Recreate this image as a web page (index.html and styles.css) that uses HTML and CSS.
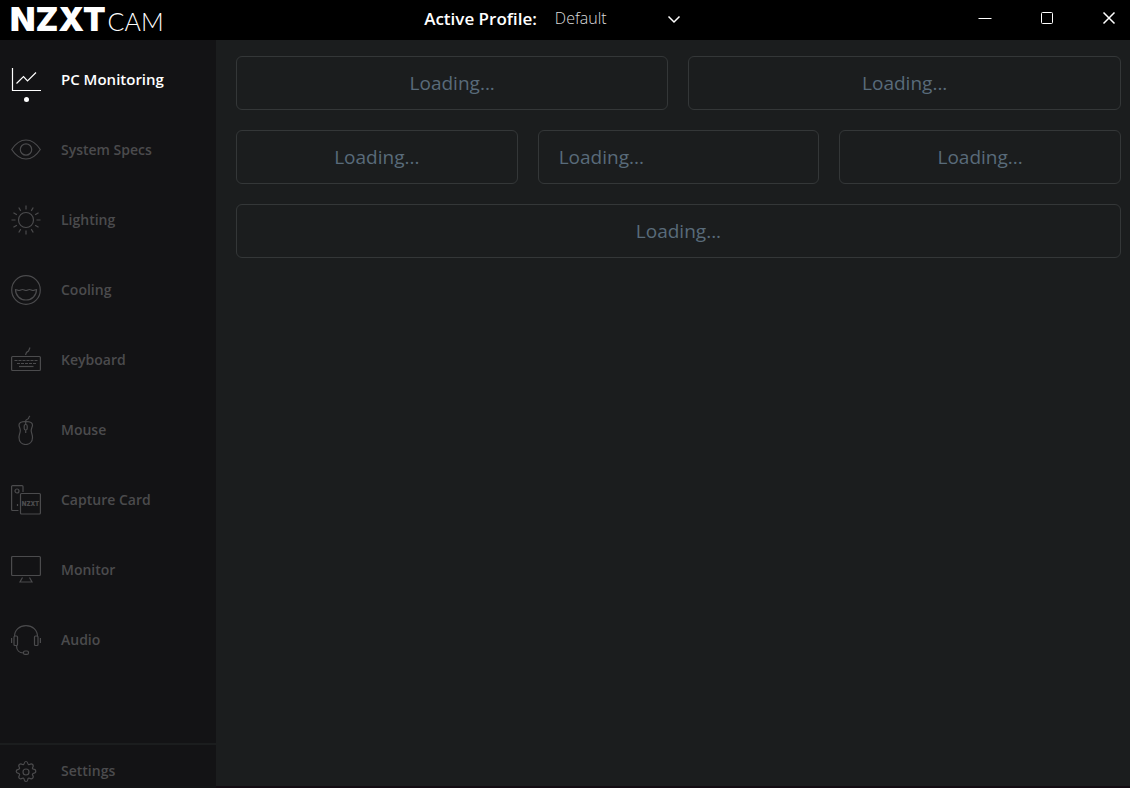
FILE: index.html
```html
<!DOCTYPE html>
<html lang="en">
<head>
  <meta charset="utf-8">
  <title>NZXT CAM</title>
  <link rel="stylesheet" href="styles.css">
</head>
<body>
  <header class="titlebar">
    <div class="logo"><span class="logo-brand">NZXT</span><span class="logo-product">CAM</span></div>

    <div class="profile">
      <label class="profile-label" for="profile">Active Profile:</label>
      <div class="profile-picker">
        <select id="profile" class="profile-select">
          <option>Default</option>
        </select>
        <svg class="chevron" viewBox="0 0 14 14"><path d="M1.5 4.500 7 10l5.500-5.500"/></svg>
      </div>
    </div>

    <div class="window-controls">
      <button type="button" aria-label="Minimize"><svg viewBox="0 0 14 14"><path d="M.5 7.500h13"/></svg></button>
      <button type="button" aria-label="Maximize"><svg viewBox="0 0 14 14"><rect x="1.500" y="1.500" width="11" height="11" rx="1"/></svg></button>
      <button type="button" aria-label="Close"><svg class="close" viewBox="0 0 14 14"><path d="M1.500 1.500l11 11M12.500 1.500l-11 11"/></svg></button>
    </div>
  </header>

  <div class="app">
    <aside class="sidebar">
      <nav class="nav">
        <a class="nav-item active" href="#monitoring">
          <svg class="icon" viewBox="0 0 30 30"><path d="M1.500 3v22.500H30M5.500 18.500l7-7 4 4.500 8.500-8.500"/></svg>
          <span>PC Monitoring</span>
        </a>
        <a class="nav-item" href="#specs">
          <svg class="icon" viewBox="0 0 30 30"><path d="M.7 14.500C5 8 9.500 5 15 5s10 3 14.300 9.500C25 21 20.500 24 15 24S5 21 .7 14.500z"/><circle cx="15" cy="14.500" r="5.700"/></svg>
          <span>System Specs</span>
        </a>
        <a class="nav-item" href="#lighting">
          <svg class="icon" viewBox="0 0 30 30">
            <circle cx="15" cy="15" r="7.500"/>
            <path d="M15 .5v4M15 25.500v4M.5 15h4M25.500 15h4M7.750 2.440l2 3.460M20.250 24.100l2 3.460M2.440 7.750l3.460 2M24.100 20.250l3.460 2M2.440 22.250l3.460-2M24.100 9.750l3.460-2M7.750 27.560l2-3.460M20.250 5.900l2-3.460"/>
          </svg>
          <span>Lighting</span>
        </a>
        <a class="nav-item" href="#cooling">
          <svg class="icon" viewBox="0 0 30 30"><circle cx="15" cy="15" r="14.300"/><path d="M4.500 14.500c0 6 4.500 10.500 10.500 10.500s10.500-4.500 10.500-10.500c-1.500 0-2 1-3.500 1s-2-1-3.500-1-2 1-3.500 1-2-1-3.500-1-2 1-3.500 1-2-1-3.500-1z"/></svg>
          <span>Cooling</span>
        </a>
        <a class="nav-item" href="#keyboard">
          <svg class="icon" viewBox="0 0 30 30"><rect x=".6" y="11.500" width="28.800" height="14" rx="1"/><path d="M14.500 10l1-2.500 2-1.500 1.500-3.500"/><path class="keys" d="M3.500 15.500h23.500M6 18.500h19"/><path d="M8 21.500h14.500"/></svg>
          <span>Keyboard</span>
        </a>
        <a class="nav-item" href="#mouse">
          <svg class="icon" viewBox="0 0 30 30"><path d="M14.700 6.500c-3 0-6.700 1-6.700 3.500 0 2 1.300 3 1.300 5.500S8 19.500 8 22.500c0 4.500 3 7 6.700 7s6.800-2.500 6.800-7c0-3-1.300-4.500-1.300-7s1.300-3.500 1.300-5.500c0-2.500-3.800-3.500-6.800-3.500zM14.700 6.500v3M14.700 15v3M14.700 9.500c-1 0-1.500.7-1.500 1.500v2.500c0 .8.500 1.500 1.500 1.500s1.500-.7 1.500-1.500V11c0-.8-.5-1.500-1.500-1.500zM14.700 6c0-2 2.300-1.500 2.800-2.500S17.500 2 19 1"/></svg>
          <span>Mouse</span>
        </a>
        <a class="nav-item" href="#capture">
          <svg class="icon" viewBox="0 0 30 30"><path d="M7.500 25.500H1.600a1 1 0 0 1-1-1V1.600a1 1 0 0 1 1-1H11a1 1 0 0 1 1 1V7M6.500 19v2"/><circle cx="6" cy="6" r="2"/><rect x="9.500" y="8.500" width="19.900" height="20.500" rx="1"/><text class="icon-text" x="19.500" y="21" text-anchor="middle">NZXT</text></svg>
          <span>Capture Card</span>
        </a>
        <a class="nav-item" href="#monitor">
          <svg class="icon" viewBox="0 0 30 30"><rect x=".6" y="1.500" width="28.800" height="19" rx="1"/><path d="M11.500 22.500l-2.500 4.500h12l-2.500-4.500"/></svg>
          <span>Monitor</span>
        </a>
        <a class="nav-item" href="#audio">
          <svg class="icon" viewBox="0 0 30 30"><path d="M3.500 11.500C3.500 5 8.500.6 15 .6S26.500 5 26.500 11.500M.6 13v5M29.400 13v5M5.500 20.500c0 5 3 7.500 7 7.500"/><rect x="3" y="11" width="3.500" height="9.500" rx="1"/><rect x="23.500" y="11" width="3.500" height="9.500" rx="1"/><rect x="12.500" y="26" width="5" height="3.400" rx="1.500"/></svg>
          <span>Audio</span>
        </a>
      </nav>

      <a class="settings" href="#settings">
        <svg class="icon" viewBox="0 0 30 30"><circle cx="15" cy="15" r="3"/><path stroke-linejoin="round" d="M13.200 6.500q.3-2 1.800-2t1.800 2q.3 1.500 1.800 1 1.800-1.300 3 0t0 3q-.6 1.300 1 1.700 2.200.3 2.200 1.800 0 2-2.200 2.300-1.600.5-1 1.900 1.300 1.800 0 3t-3 .1q-1.500-.6-1.800 1.200-.3 2-1.800 2t-1.800-2q-.3-1.800-1.800-1.200-1.800 1.200-3 0t0-3q.6-1.500-1-2-2.200-.3-2.200-2t2.200-2q1.600-.4 1-1.800-1.300-1.800 0-3t3 0q1.500.5 1.800-1z"/></svg>
        <span>Settings</span>
      </a>
    </aside>

    <main class="dashboard">
      <section class="card half">Loading...</section>
      <section class="card half">Loading...</section>
      <section class="card third">Loading...</section>
      <section class="card third card-left">Loading...</section>
      <section class="card third">Loading...</section>
      <section class="card full">Loading...</section>
    </main>
  </div>
</body>
</html>
```
FILE: styles.css
```css
* {
  box-sizing: border-box;
}

body {
  margin: 0;
  min-height: 100vh;
  display: flex;
  flex-direction: column;
  background: #131315;
  color: #fff;
  font-family: "Segoe UI", "Open Sans", "Noto Sans", sans-serif;
}

svg {
  fill: none;
  stroke: currentColor;
}

/* title bar */
.titlebar {
  display: flex;
  align-items: center;
  height: 40px;
  padding: 0 1px 0 10px;
  background: #000;
}

.logo {
  flex: 1;
  display: flex;
  align-items: baseline;
  gap: 2px;
  line-height: 40px;
}

.logo-brand {
  font-family: Inter, sans-serif;
  font-size: 33px;
  font-weight: 900;
}

.logo-product {
  font-family: Lato, sans-serif;
  font-size: 25px;
  font-weight: 300;
}

.profile {
  display: flex;
  align-items: center;
  gap: 18px;
  padding-bottom: 4px;
}

.profile-label {
  font-size: 17px;
  font-weight: 600;
}

.profile-picker {
  position: relative;
  width: 160px;
}

.profile-select {
  appearance: none;
  width: 100%;
  padding: 0;
  border: 0;
  background: transparent;
  color: #ddd;
  font-family: inherit;
  font-size: 16px;
  font-weight: 300;
}

.profile-select option {
  background: #131315;
}

.chevron {
  position: absolute;
  top: 5px;
  right: 34px;
  width: 14px;
  height: 14px;
  stroke-width: 1.5;
  pointer-events: none;
}

.window-controls {
  flex: 1;
  display: flex;
  justify-content: flex-end;
  gap: 22px;
  padding-bottom: 4px;
}

.window-controls button {
  display: flex;
  align-items: center;
  justify-content: center;
  width: 40px;
  height: 36px;
  padding: 0;
  border: 0;
  background: transparent;
  color: #fff;
}

.window-controls button:hover {
  background: #222;
}

.window-controls svg {
  width: 14px;
  height: 14px;
}

.window-controls .close {
  stroke-width: 1.5;
}

/* layout */
.app {
  flex: 1;
  display: flex;
}

.sidebar {
  width: 216px;
  display: flex;
  flex-direction: column;
  justify-content: space-between;
  background: #131315;
}

.nav {
  padding-top: 5px;
}

.nav-item,
.settings {
  display: flex;
  align-items: center;
  gap: 20px;
  padding-left: 11px;
  color: #4b4b4d;
  font-size: 14px;
  font-weight: 600;
  text-decoration: none;
}

.nav-item span,
.settings span {
  padding-bottom: 2px;
}

.nav-item {
  position: relative;
  height: 70px;
}

.nav-item:hover,
.settings:hover,
.nav-item.active {
  color: #fff;
}

.nav-item.active {
  font-size: 15px;
}

.nav-item.active::after {
  content: "";
  position: absolute;
  left: 24px;
  bottom: 13px;
  width: 5px;
  height: 5px;
  border-radius: 50%;
  background: #fff;
}

.icon {
  width: 30px;
  height: 30px;
  stroke-width: 1.2;
}

.keys {
  stroke-dasharray: 3 1;
}

.icon-text {
  fill: currentColor;
  stroke: none;
  font-family: Inter, sans-serif;
  font-size: 6px;
  font-weight: 900;
}

.settings {
  height: 45px;
  padding-top: 10px;
  border-top: 2px solid #1b1d1e;
}

/* dashboard */
.dashboard {
  flex: 1;
  display: grid;
  grid-template-columns: repeat(6, 1fr);
  grid-auto-rows: 54px;
  gap: 20px;
  padding: 16px 9px 16px 20px;
  background: #1b1d1e;
  border-bottom: 2px solid #130c12;
}

.card {
  display: flex;
  align-items: center;
  justify-content: center;
  padding: 0 20px;
  border: 1px solid #343738;
  border-radius: 6px;
  color: #596b7a;
  font-size: 19px;
}

.card-left {
  justify-content: flex-start;
}

.half {
  grid-column: span 3;
}

.third {
  grid-column: span 2;
}

.full {
  grid-column: span 6;
}
```
